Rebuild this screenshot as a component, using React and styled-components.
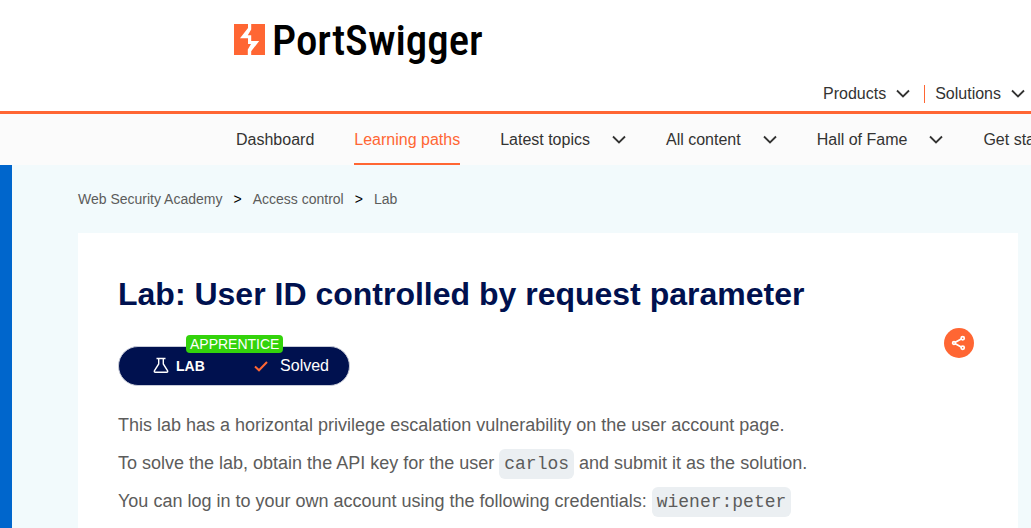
import React from "react";
import styled, { createGlobalStyle } from "styled-components";

const GlobalStyle = createGlobalStyle`
  * { box-sizing: border-box; }
  body {
    margin: 0;
    background: #fff;
    color: #333332;
    font-family: "Liberation Sans", Arial, sans-serif;
    font-size: 16px;
    line-height: 24px;
    overflow: hidden;
  }
`;

const Page = styled.div`
  display: flex;
  flex-direction: column;
  min-height: 100vh;
  overflow: hidden;
`;

const Header = styled.header`
  padding: 20px 0 5px 234px;
  border-bottom: 3px solid #ff6633;
`;

const LogoLink = styled.a`
  display: flex;
  align-items: center;
  gap: 6px;
  height: 40px;
  color: #000;
  font: 500 43px/40px "Roboto Condensed", "Liberation Sans Narrow", Roboto, sans-serif;
  text-decoration: none;
`;

const ProductNav = styled.nav`
  display: flex;
  justify-content: flex-end;
  align-items: center;
  gap: 10px;
  margin-top: 22px;
  padding-right: 6px;
`;

const MenuButton = styled.button`
  display: flex;
  flex: none;
  align-items: center;
  gap: ${(p) => p.$gap}px;
  padding: 0;
  border: 0;
  background: none;
  color: inherit;
  font: inherit;
  white-space: nowrap;
  cursor: pointer;
`;

const Divider = styled.span`
  width: 1px;
  height: 18px;
  margin-left: 4px;
  background: #ff6633;
`;

const AcademyNav = styled.nav`
  display: flex;
  gap: 40px;
  height: 51px;
  padding-left: 236px;
  background: #fbfbfb;
`;

const NavLink = styled.a`
  display: flex;
  flex: none;
  align-items: center;
  border-bottom: 2px solid ${(p) => (p.$active ? "#ff6633" : "transparent")};
  border-top: 2px solid transparent;
  color: ${(p) => (p.$active ? "#ff6633" : "inherit")};
  text-decoration: none;
  white-space: nowrap;
`;

const Main = styled.main`
  display: flex;
  flex: 1;
  flex-direction: column;
  border-left: 12px solid #0066cc;
  padding: 22px 13px 0 66px;
  background: #f2fafc;
`;

const Breadcrumbs = styled.nav`
  display: flex;
  gap: 11px;
  margin-bottom: 22px;
  color: #000;
  font-size: 14px;

  a {
    color: #5c5c5b;
    text-decoration: none;
  }
`;

const Card = styled.article`
  flex: 1;
  padding: 40px 44px 8px 40px;
  background: #fff;
`;

const Title = styled.h1`
  margin: 0;
  color: #00114f;
  font-size: 32px;
  line-height: 42px;
`;

const StatusRow = styled.div`
  display: flex;
  justify-content: space-between;
  align-items: flex-start;
  margin: 13px 0 20px;
`;

const Status = styled.div`
  position: relative;
  display: flex;
  align-items: center;
  width: 232px;
  height: 40px;
  margin-top: 18px;
  padding: 0 20px 0 34px;
  border: 1px solid #c8ccd8;
  border-radius: 20px;
  background: #00114f;
  color: #fff;
`;

const Level = styled.span`
  position: absolute;
  top: -12px;
  left: 67px;
  padding: 0 4px;
  border-radius: 4px;
  background: #33d30b;
  font-size: 14px;
  line-height: 18px;
`;

const Kind = styled.strong`
  margin: 0 auto 0 7px;
  font-size: 14px;
`;

const Solved = styled.span`
  margin-left: 12px;
`;

const ShareButton = styled.button`
  display: grid;
  place-items: center;
  width: 30px;
  height: 30px;
  padding: 0;
  border: 0;
  border-radius: 50%;
  background: #ff6633;
  cursor: pointer;
`;

const Text = styled.p`
  margin: 0;
  color: #5c5c5b;
  font-size: 18px;
  line-height: 38px;
`;

const Code = styled.code`
  padding: 5px;
  border-radius: 6px;
  background: #ebeff2;
  font: 18px "Liberation Mono", monospace;
`;

const Chevron = () => (
  <svg width="14" height="10" viewBox="0 0 14 10" fill="none" stroke="#333332" strokeWidth="1.8" aria-hidden="true">
    <path d="M1 1.5 7 7.5 13 1.5" />
  </svg>
);

const LogoMark = () => (
  <svg width="32" height="32" viewBox="0 0 32 32" fill="#ff6633" aria-hidden="true">
    <path d="M0 0H14V4L6 14.2H14V20H17L13.8 25.5V31H0Z" />
    <path d="M17.2 0H31V31H17.2V27.3L25.2 17H17.2V11.3H13.8L17.2 5.5Z" />
  </svg>
);

const Flask = () => (
  <svg width="16" height="18" viewBox="0 0 16 18" fill="none" stroke="#fff" strokeWidth="1.4" aria-hidden="true">
    <path d="M3.5 1.5H12.5M5.7 1.5V7L1.5 13.6Q.8 15.2 2.4 15.2H13.6Q15.2 15.2 14.5 13.6L10.3 7V1.5" />
  </svg>
);

const Check = () => (
  <svg width="14" height="12" viewBox="0 0 14 12" fill="none" stroke="#ff6633" strokeWidth="2" aria-hidden="true">
    <path d="M1 6.5 5 10.3 13 2" />
  </svg>
);

const Share = () => (
  <svg width="16" height="16" viewBox="0 0 16 16" fill="none" stroke="#fff" strokeWidth="1.7" aria-hidden="true">
    <path d="M4.3 7.2 10.2 4M4.3 8.8 10.2 12" />
    <circle cx="3" cy="8" r="1.4" />
    <circle cx="11.7" cy="3.2" r="1.6" />
    <circle cx="11.7" cy="12.8" r="1.6" />
  </svg>
);

const Menu = ({ label, gap }) => (
  <MenuButton type="button" $gap={gap}>
    {label}
    <Chevron />
  </MenuButton>
);

export default function App() {
  return (
    <Page>
      <GlobalStyle />
      <Header>
        <LogoLink href="#">
          <LogoMark />
          PortSwigger
        </LogoLink>
        <ProductNav aria-label="Products">
          <Menu label="Products" gap={10} />
          <Divider />
          <Menu label="Solutions" gap={10} />
        </ProductNav>
      </Header>
      <AcademyNav aria-label="Academy">
        <NavLink href="#">Dashboard</NavLink>
        <NavLink href="#" $active>Learning paths</NavLink>
        <Menu label="Latest topics" gap={22} />
        <Menu label="All content" gap={22} />
        <Menu label="Hall of Fame" gap={22} />
        <Menu label="Get started" gap={22} />
      </AcademyNav>
      <Main>
        <Breadcrumbs aria-label="Breadcrumb">
          <a href="#">Web Security Academy</a>
          <span>&gt;</span>
          <a href="#">Access control</a>
          <span>&gt;</span>
          <a href="#">Lab</a>
        </Breadcrumbs>
        <Card>
          <Title>Lab: User ID controlled by request parameter</Title>
          <StatusRow>
            <Status>
              <Level>APPRENTICE</Level>
              <Flask />
              <Kind>LAB</Kind>
              <Check />
              <Solved>Solved</Solved>
            </Status>
            <ShareButton type="button" aria-label="Share">
              <Share />
            </ShareButton>
          </StatusRow>
          <Text>This lab has a horizontal privilege escalation vulnerability on the user account page.</Text>
          <Text>
            To solve the lab, obtain the API key for the user <Code>carlos</Code> and submit it as the solution.
          </Text>
          <Text>
            You can log in to your own account using the following credentials: <Code>wiener:peter</Code>
          </Text>
        </Card>
      </Main>
    </Page>
  );
}
